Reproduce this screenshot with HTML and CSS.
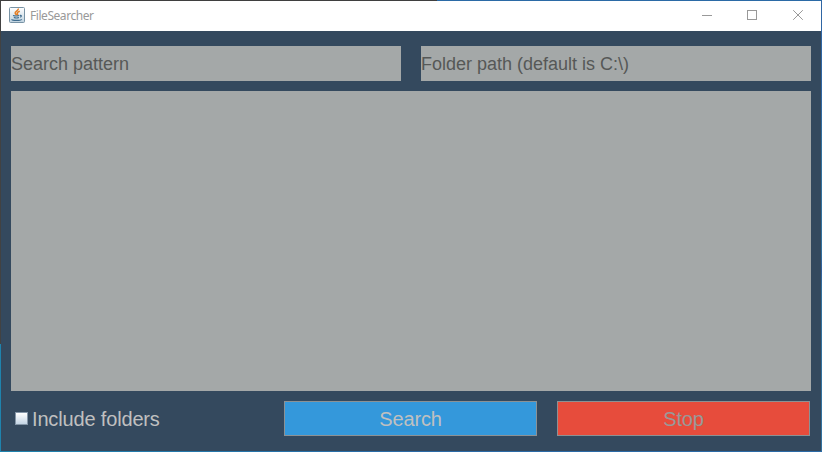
FILE: index.html
```html
<!DOCTYPE html>
<html lang="en">
<head>
<meta charset="utf-8">
<title>FileSearcher</title>
<link rel="stylesheet" href="styles.css">
</head>
<body>
<div class="window">
  <header class="titlebar">
    <svg class="app-icon" width="16" height="16" viewBox="0 0 16 16">
      <defs><linearGradient id="tile" x1="0" y1="0" x2="0" y2="1"><stop offset="0" stop-color="#fff"/><stop offset="1" stop-color="#bfd2df"/></linearGradient></defs>
      <rect x=".5" y=".5" width="15" height="15" rx="1" fill="url(#tile)" stroke="#7893a5"/>
      <path d="M9.3 1.5C9.8 3.8 5.4 4.5 6.2 6.3L7.6 8.3M10.8 4.3C8.6 5 7.8 5.8 8.5 6.8Q9 7.5 8.3 8.3" fill="none" stroke="#e57e25" stroke-width="1.5"/>
      <path d="M4 8.5Q7 9.5 10.3 8.5M4.8 10.5Q7.5 11.5 10 10.5M11 8.4Q13.5 8.2 11.3 10.4M3 12.2Q2.5 13.4 7.5 13.4T12.6 12.2" fill="none" stroke="#3f6c8e" stroke-width="1.2"/>
    </svg>
    <span class="title">FileSearcher</span>
    <svg class="controls" width="138" height="30" viewBox="0 0 138 30" fill="none" stroke="#999">
      <path d="M19 14.5H29M64.5 9.5H73.5V18.5H64.5Z" shape-rendering="crispEdges"/>
      <path d="M110.2 9.2L119.8 18.8M119.8 9.2L110.2 18.8"/>
    </svg>
  </header>
  <main class="content">
    <div class="fields">
      <div class="field">Search pattern</div>
      <div class="field">Folder path (default is C:\)</div>
    </div>
    <div class="results"></div>
    <div class="actions">
      <label class="option"><span class="box"></span><span>Include folders</span></label>
      <div class="button search">Search</div>
      <div class="button stop">Stop</div>
    </div>
  </main>
</div>
</body>
</html>
```
FILE: styles.css
```css
* { box-sizing: border-box; }

body {
  margin: 0;
  height: 452px;
  overflow: hidden;
  padding: 1px;
  font-family: "Liberation Sans", Arial, sans-serif;
  background:
    linear-gradient(90deg, #3f3f3f 437px, #2b6aa6 437px) top / 100% 1px no-repeat,
    linear-gradient(#424242 344px, #1f83ad 344px) left / 1px 100% no-repeat,
    linear-gradient(90deg, #1f83ad, #2b6aa6 50%) bottom / 100% 1px no-repeat,
    linear-gradient(#2f66a4, #2f66a4 90px, #33729f 150px, #33729f 250px, #2f5f9c 270px, #33729f 290px) right / 1px 100% no-repeat;
}

.window {
  height: 450px;
  display: flex;
  flex-direction: column;
  background: #34495e;
}

.titlebar {
  height: 30px;
  display: flex;
  align-items: center;
  padding-left: 8px;
  background: #fff;
}

.app-icon {
  position: relative;
  top: -1px;
}

.title {
  margin-left: 5px;
  font: 12px/16px "Noto Sans", "Open Sans", sans-serif;
  letter-spacing: -0.45px;
  color: #999;
}

.controls { margin-left: auto; }

.content {
  flex: 1;
  display: flex;
  flex-direction: column;
  gap: 10px;
  padding: 15px 10px;
}

.fields {
  display: grid;
  grid-template-columns: 1fr 1fr;
  gap: 20px;
}

.field {
  height: 35px;
  font-size: 18px;
  line-height: 36px;
  color: #565857;
  background: #a4a8a8;
}

.results {
  height: 300px;
  background: #a4a8a8;
}

.actions {
  display: grid;
  grid-template-columns: 253px 253px 253px;
  grid-template-rows: 35px;
  gap: 20px;
  font-size: 20px;
  letter-spacing: -0.16px;
}

.option {
  display: flex;
  align-items: center;
  gap: 4px;
  padding-left: 4px;
  color: #c0c0c0;
  line-height: 36px;
}

.box {
  width: 13px;
  height: 13px;
  margin-bottom: 1px;
  border: 1px solid #8496a8;
  background: linear-gradient(#fff, #c3d5e5);
}

.button {
  border: 1px solid #8c9194;
  line-height: 34px;
  text-align: center;
}

.search {
  background: #3498db;
  color: #c0c0c0;
}

.stop {
  background: #e74c3c;
  color: #999;
}
```
